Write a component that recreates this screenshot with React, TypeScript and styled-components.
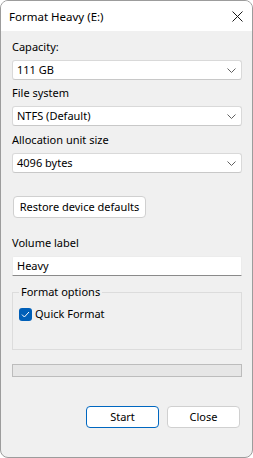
import styled, { createGlobalStyle } from "styled-components";

const GlobalStyle = createGlobalStyle`
  html, body {
    margin: 0;
    padding: 0;
    background: #ffffff;
  }
  body {
    font-family: "Segoe UI", "Noto Sans", sans-serif;
    font-size: 11px;
    color: #000000;
  }
`;

const Chevron = () => (
  <svg width="9" height="5" viewBox="0 0 9 5" fill="none">
    <path d="M0.5 0.5 L4.5 4.5 L8.5 0.5" stroke="#606060" strokeWidth="1" />
  </svg>
);

const CloseGlyph = () => (
  <svg width="11" height="11" viewBox="0 0 11 11" fill="none">
    <path d="M0.5 0.5 L10.5 10.5 M10.5 0.5 L0.5 10.5" stroke="#1a1a1a" strokeWidth="1" />
  </svg>
);

const CheckMark = () => (
  <svg width="9" height="7" viewBox="0 0 9 7" fill="none">
    <path d="M1 3.6 L3.4 6 L8 1" stroke="#ffffff" strokeWidth="1" />
  </svg>
);

export default function App() {
  return (
    <>
      <GlobalStyle />
      <Window>
        <TitleBar>
          <Title>Format Heavy (E:)</Title>
          <CloseButton>
            <CloseGlyph />
          </CloseButton>
        </TitleBar>
        <Body>
          <FieldLabel $top={8}>Capacity:</FieldLabel>
          <Select>
            <span>111 GB</span>
            <Chevron />
          </Select>
          <FieldLabel $top={5}>File system</FieldLabel>
          <Select>
            <span>NTFS (Default)</span>
            <Chevron />
          </Select>
          <FieldLabel $top={6}>Allocation unit size</FieldLabel>
          <Select>
            <span>4096 bytes</span>
            <Chevron />
          </Select>
          <ButtonRow $top={23} $justify="flex-start">
            <PushButton $width={133}>Restore device defaults</PushButton>
          </ButtonRow>
          <FieldLabel $top={17}>Volume label</FieldLabel>
          <TextInput>Heavy</TextInput>
          <GroupBox>
            <Legend>Format options</Legend>
            <CheckRow>
              <CheckBox>
                <CheckMark />
              </CheckBox>
              <span>Quick Format</span>
            </CheckRow>
          </GroupBox>
          <Progress />
          <ButtonRow $top={29} $justify="flex-end">
            <PushButton $width={73} $primary>
              Start
            </PushButton>
            <PushButton $width={73}>Close</PushButton>
          </ButtonRow>
        </Body>
      </Window>
    </>
  );
}

const Window = styled.div`
  box-sizing: border-box;
  width: 253px;
  height: 458px;
  border: 1px solid #9c9c9c;
  border-radius: 8px;
  overflow: hidden;
  background: #f0f0f0;
  display: flex;
  flex-direction: column;
`;

const TitleBar = styled.div`
  height: 30px;
  background: #ffffff;
  display: flex;
  align-items: center;
  justify-content: space-between;
  padding: 0 9px 0 8px;
`;

const Title = styled.div`
  font-size: 11.5px;
  line-height: 16px;
  margin-top: 1px;
`;

const CloseButton = styled.div`
  width: 11px;
  height: 11px;
  display: flex;
`;

const Body = styled.div`
  flex: 1;
  display: flex;
  flex-direction: column;
  padding: 0 10px 0 11px;
`;

const FieldLabel = styled.div<{ $top: number }>`
  margin-top: ${({ $top }) => $top}px;
  margin-bottom: 5px;
  line-height: 16px;
`;

const Select = styled.div`
  box-sizing: border-box;
  height: 20px;
  background: #ffffff;
  border: 1px solid #d9d9d9;
  border-bottom-color: #c8c8c8;
  border-radius: 3px;
  display: flex;
  align-items: center;
  justify-content: space-between;
  padding: 0 5px 0 4px;
  line-height: 16px;
`;

const TextInput = styled.div`
  box-sizing: border-box;
  height: 20px;
  background: #ffffff;
  border: 1px solid #ececec;
  border-bottom: 1px solid #8a8a8a;
  border-radius: 2px 2px 0 0;
  display: flex;
  align-items: center;
  padding: 0 4px;
  line-height: 16px;
`;

const ButtonRow = styled.div<{ $top: number; $justify: string }>`
  display: flex;
  justify-content: ${({ $justify }) => $justify};
  gap: 8px;
  margin-top: ${({ $top }) => $top}px;
  padding: 0 2px 0 1px;
`;

const PushButton = styled.div<{ $width: number; $primary?: boolean }>`
  box-sizing: border-box;
  width: ${({ $width }) => $width}px;
  height: 22px;
  background: #ffffff;
  border: 1px solid ${({ $primary }) => ($primary ? "#0067c0" : "#d0d0d0")};
  border-radius: 4px;
  display: flex;
  align-items: center;
  justify-content: center;
  line-height: 16px;
`;

const GroupBox = styled.fieldset`
  margin: 8px 0 0 0;
  padding: 0 6px;
  height: 66px;
  box-sizing: border-box;
  border: 1px solid #dcdcdc;
  border-radius: 0;
  min-width: 0;
`;

const Legend = styled.legend`
  padding: 0 2px;
  line-height: 16px;
`;

const CheckRow = styled.div`
  display: flex;
  align-items: center;
  gap: 3px;
  margin-top: 6px;
  line-height: 16px;
`;

const CheckBox = styled.div`
  width: 13px;
  height: 13px;
  border-radius: 3px;
  background: #005fb8;
  display: flex;
  align-items: center;
  justify-content: center;
`;

const Progress = styled.div`
  box-sizing: border-box;
  height: 13px;
  margin-top: 14px;
  background: #e6e6e6;
  border: 1px solid #bcbcbc;
`;
